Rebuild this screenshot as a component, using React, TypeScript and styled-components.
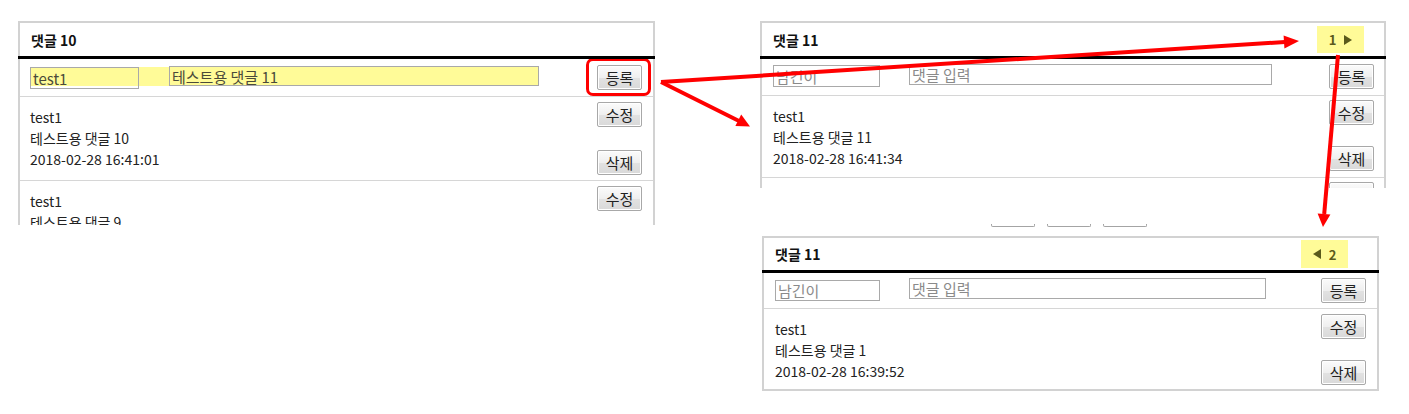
import React from "react";
import styled, { createGlobalStyle } from "styled-components";

const GlobalStyle = createGlobalStyle`
  html, body { margin: 0; padding: 0; background: #ffffff; }
  body {
    font-family: "Noto Sans CJK KR", "Noto Sans", sans-serif;
    font-size: 13px;
    color: #222222;
  }
`;

const Page = styled.div`
  position: relative;
  box-sizing: border-box;
  width: 1409px;
  height: 414px;
  padding: 21px 0 0 18px;
  display: flex;
  align-items: flex-start;
  overflow: hidden;
`;

const RightColumn = styled.div`
  display: flex;
  flex-direction: column;
  align-items: flex-start;
  margin-left: 105px;
`;

const Panel = styled.section<{ $w: number; $h: number; $cut?: boolean; $ml?: number }>`
  box-sizing: border-box;
  flex: none;
  width: ${(p) => p.$w}px;
  height: ${(p) => p.$h}px;
  margin-left: ${(p) => p.$ml ?? 0}px;
  border: 2px solid #d2d2d2;
  border-bottom: ${(p) => (p.$cut ? "none" : "2px solid #d2d2d2")};
  background: #ffffff;
  display: flex;
  flex-direction: column;
`;

const Header = styled.header<{ $h: number; $pr: number }>`
  flex: none;
  height: ${(p) => p.$h}px;
  margin: 0 -2px;
  padding: 0 ${(p) => p.$pr}px 0 13px;
  display: flex;
  align-items: center;
  justify-content: space-between;
  border-bottom: 3px solid #000000;
  font-weight: 700;
  font-size: 14px;
  color: #111111;
`;

const PageBox = styled.div<{ $h: number }>`
  width: 47px;
  height: ${(p) => p.$h}px;
  background: #fffb98;
  display: flex;
  align-items: center;
  justify-content: center;
  gap: 8px;
  font-size: 13px;
  font-weight: 700;
  color: #5a5a1c;
`;

const Tri = styled.span<{ $dir: "left" | "right" }>`
  width: 0;
  height: 0;
  border-top: 5px solid transparent;
  border-bottom: 5px solid transparent;
  ${(p) =>
    p.$dir === "right"
      ? "border-left: 8px solid #5a5a1c;"
      : "border-right: 8px solid #5a5a1c;"}
`;

const Body = styled.div`
  flex: 1;
  min-height: 0;
  overflow: hidden;
`;

const InputRow = styled.div<{ $h: number; $pt: number; $pl: number; $pr: number }>`
  box-sizing: border-box;
  height: ${(p) => p.$h + 1}px;
  padding: ${(p) => p.$pt}px ${(p) => p.$pr}px 0 ${(p) => p.$pl}px;
  display: flex;
  align-items: flex-start;
  justify-content: space-between;
  border-bottom: 1px solid #d6d6d6;
`;

const Fields = styled.div<{ $gap: number; $mt: number; $hl?: boolean }>`
  display: flex;
  align-items: flex-start;
  gap: ${(p) => p.$gap}px;
  margin-top: ${(p) => p.$mt}px;
  ${(p) => (p.$hl ? "background: #fffb98; height: 19px;" : "")}
`;

const Field = styled.input<{ $w: number; $h: number; $mt: number }>`
  box-sizing: border-box;
  width: ${(p) => p.$w}px;
  height: ${(p) => p.$h}px;
  margin: ${(p) => p.$mt}px 0 0 0;
  padding: 0 2px;
  border: 1px solid #a9a9a9;
  border-radius: 0;
  background: transparent;
  font-family: "Noto Sans CJK KR", "Noto Sans", sans-serif;
  font-size: 15px;
  line-height: 1;
  color: #4a4a3a;
  outline: none;
  &::placeholder {
    color: #8a8a8a;
  }
`;

const Btn = styled.button`
  box-sizing: border-box;
  width: 45px;
  height: 25px;
  padding: 0;
  border: 1px solid #a8a8a8;
  border-radius: 2px;
  background: linear-gradient(#fbfbfb, #efefef 50%, #e2e2e2 51%, #d9d9d9);
  box-shadow: inset 0 0 0 1px #ffffff;
  font-family: "Noto Sans CJK KR", "Noto Sans", sans-serif;
  font-size: 15px;
  color: #222222;
  line-height: 1;
`;

const BtnWrap = styled.div<{ $ring?: boolean }>`
  position: relative;
  display: flex;
  ${(p) =>
    p.$ring
      ? `&::after {
    content: "";
    position: absolute;
    top: -7px;
    bottom: -6px;
    left: -11px;
    right: -9px;
    border: 3px solid #ff0000;
    border-radius: 7px;
    pointer-events: none;
  }`
      : ""}
`;

const CommentRow = styled.div<{ $h: number; $pl: number; $pr: number }>`
  box-sizing: border-box;
  height: ${(p) => p.$h + 1}px;
  padding: 0 ${(p) => p.$pr}px 0 ${(p) => p.$pl}px;
  display: flex;
  justify-content: space-between;
  border-bottom: 1px solid #d6d6d6;
  &:last-child {
    border-bottom: none;
    height: ${(p) => p.$h}px;
  }
`;

const CommentText = styled.div`
  padding-top: 10px;
  line-height: 21px;
  font-size: 14px;
  color: #222222;
  & > div {
    white-space: nowrap;
  }
`;

const Actions = styled.div<{ $pt: number; $gap: number }>`
  display: flex;
  flex-direction: column;
  padding-top: ${(p) => p.$pt}px;
  gap: ${(p) => p.$gap}px;
`;

const GhostStrip = styled.div`
  display: flex;
  gap: 12px;
  margin: 36px 0 9px 231px;
`;

const GhostTab = styled.div`
  box-sizing: border-box;
  width: 44px;
  height: 3px;
  border: 1px solid #a4a4a4;
  border-top: none;
  border-radius: 0 0 2px 2px;
`;

const ArrowLayer = styled.svg`
  position: absolute;
  top: 0;
  left: 0;
  z-index: 10;
  pointer-events: none;
`;

type Comment = { author: string; text: string; date: string };

type PanelCfg = {
  w: number;
  h: number;
  cut: boolean;
  ml?: number;
  title: string;
  headerH: number;
  headerPr: number;
  page?: { dir: "left" | "right"; n: string; h: number };
  pl: number;
  pr: number;
  inputRowH: number;
  inputPt: number;
  fields: { gap: number; mt: number; hl?: boolean };
  name: { w: number; h: number; mt: number; value?: string };
  text: { w: number; h: number; mt: number; value?: string };
  ring?: boolean;
  rowH: number;
  actPt: number;
  actGap: number;
  comments: Comment[];
};

const PanelView: React.FC<{ c: PanelCfg }> = ({ c }) => (
  <Panel $w={c.w} $h={c.h} $cut={c.cut} $ml={c.ml}>
    <Header $h={c.headerH} $pr={c.headerPr}>
      <span>{c.title}</span>
      {c.page && (
        <PageBox $h={c.page.h}>
          {c.page.dir === "left" && <Tri $dir="left" />}
          <span>{c.page.n}</span>
          {c.page.dir === "right" && <Tri $dir="right" />}
        </PageBox>
      )}
    </Header>
    <Body>
      <InputRow $h={c.inputRowH} $pt={c.inputPt} $pl={c.pl} $pr={c.pr}>
        <Fields $gap={c.fields.gap} $mt={c.fields.mt} $hl={c.fields.hl}>
          <Field
            $w={c.name.w}
            $h={c.name.h}
            $mt={c.name.mt}
            placeholder="남긴이"
            defaultValue={c.name.value}
          />
          <Field
            $w={c.text.w}
            $h={c.text.h}
            $mt={c.text.mt}
            placeholder="댓글 입력"
            defaultValue={c.text.value}
          />
        </Fields>
        <BtnWrap $ring={c.ring}>
          <Btn>등록</Btn>
        </BtnWrap>
      </InputRow>
      {c.comments.map((m, i) => (
        <CommentRow key={i} $h={c.rowH} $pl={c.pl} $pr={c.pr}>
          <CommentText>
            <div>{m.author}</div>
            <div>{m.text}</div>
            <div>{m.date}</div>
          </CommentText>
          <Actions $pt={c.actPt} $gap={c.actGap}>
            <Btn>수정</Btn>
            <Btn>삭제</Btn>
          </Actions>
        </CommentRow>
      ))}
    </Body>
  </Panel>
);

const leftPanel: PanelCfg = {
  w: 637,
  h: 204,
  cut: true,
  title: "댓글 10",
  headerH: 33,
  headerPr: 13,
  pl: 10,
  pr: 11,
  inputRowH: 37,
  inputPt: 6,
  fields: { gap: 30, mt: 2, hl: true },
  name: { w: 109, h: 22, mt: 0, value: "test1" },
  text: { w: 370, h: 20, mt: -1, value: "테스트용 댓글 11" },
  ring: true,
  rowH: 83,
  actPt: 5,
  actGap: 23,
  comments: [
    { author: "test1", text: "테스트용 댓글 10", date: "2018-02-28 16:41:01" },
    { author: "test1", text: "테스트용 댓글 9", date: "2018-02-28 16:40:12" },
  ],
};

const topRightPanel: PanelCfg = {
  w: 626,
  h: 167,
  cut: true,
  title: "댓글 11",
  headerH: 33,
  headerPr: 22,
  page: { dir: "right", n: "1", h: 27 },
  pl: 11,
  pr: 10,
  inputRowH: 36,
  inputPt: 5,
  fields: { gap: 29, mt: 0 },
  name: { w: 107, h: 22, mt: 1 },
  text: { w: 363, h: 21, mt: 0 },
  rowH: 81,
  actPt: 4,
  actGap: 21,
  comments: [
    { author: "test1", text: "테스트용 댓글 11", date: "2018-02-28 16:41:34" },
    { author: "test1", text: "테스트용 댓글 10", date: "2018-02-28 16:41:01" },
  ],
};

const bottomRightPanel: PanelCfg = {
  w: 617,
  h: 155,
  cut: false,
  ml: 2,
  title: "댓글 11",
  headerH: 32,
  headerPr: 31,
  page: { dir: "left", n: "2", h: 28 },
  pl: 11,
  pr: 11,
  inputRowH: 35,
  inputPt: 5,
  fields: { gap: 29, mt: 0 },
  name: { w: 105, h: 21, mt: 2 },
  text: { w: 357, h: 21, mt: 0 },
  rowH: 80,
  actPt: 5,
  actGap: 21,
  comments: [
    { author: "test1", text: "테스트용 댓글 1", date: "2018-02-28 16:39:52" },
  ],
};

const Arrows: React.FC = () => (
  <ArrowLayer width={1409} height={414} viewBox="0 0 1409 414">
    <g stroke="#ff0000" strokeWidth={4} fill="none">
      <line x1={661} y1={82} x2={1285} y2={42} />
      <line x1={661} y1={82} x2={739} y2={121} />
      <line x1={1338} y1={55} x2={1324.2} y2={214} />
    </g>
    <g fill="#ff0000">
      <polygon points="1299,41 1284.4,48.4 1283.6,35.4" />
      <polygon points="750,126.5 735.4,126 741.2,114.4" />
      <polygon points="1323,227 1317.6,213.4 1330.4,214.6" />
    </g>
  </ArrowLayer>
);

export default function App() {
  return (
    <>
      <GlobalStyle />
      <Page>
        <PanelView c={leftPanel} />
        <RightColumn>
          <PanelView c={topRightPanel} />
          <GhostStrip>
            <GhostTab />
            <GhostTab />
            <GhostTab />
          </GhostStrip>
          <PanelView c={bottomRightPanel} />
        </RightColumn>
        <Arrows />
      </Page>
    </>
  );
}
